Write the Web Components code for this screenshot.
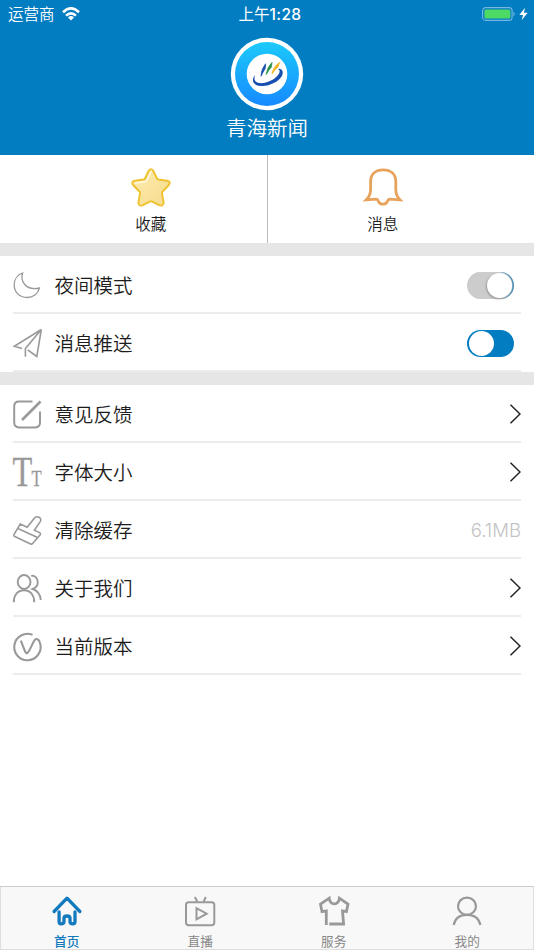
<!DOCTYPE html>
<html lang="zh-CN">
<head>
<meta charset="utf-8">
<title>青海新闻</title>
<style>
  html, body {
    margin: 0;
    height: 100%;
  }
  body {
    font-family: "Inter", "Noto Sans CJK SC", sans-serif;
    font-weight: 350;
    color: #1c1c1c;
    background: #fff;
    overflow: hidden;
  }
</style>
</head>
<body>
<news-app></news-app>

<script>
(function() {
  const icons = {
    star: `<defs><linearGradient id="g" x1="0" y1="0" x2="1" y2="1"><stop offset="0" stop-color="#fdebb0"/><stop offset="1" stop-color="#f7db8c"/></linearGradient></defs>
      <path d="M17.7 2.8Q20 -.5 22.3 2.8L26 10.5Q26.4 11.3 27.4 11.5L36 12.7Q40.5 13.7 37.8 17L31.6 23.5Q30.8 24.4 31 25.6L32.6 34Q32.8 38.6 28.6 37.4L21.2 33.6Q20 33 18.8 33.6L11.4 37.4Q7.2 38.6 7.4 34L9 25.6Q9.2 24.4 8.4 23.5L2.2 17Q-.5 13.7 4 12.7L12.6 11.5Q13.6 11.3 14 10.5Z" fill="url(#g)" stroke="#efc22f" stroke-width="1.9"/>
      <path d="M4.5 15L14.5 13.5Q15.6 13.2 16 12.3L20 4" fill="none" stroke="#fffbe8" stroke-width="1.3" stroke-linecap="round"/>`,
    bell: `<path d="M3.2 31.8Q7.6 27.5 7.6 21.5V13.7C7.6 6 12.8 1.8 20.2 1.8S32.8 6 32.8 13.7V21.5Q32.8 27.5 37 31.8L26.8 31.2Q25.2 31.4 24.5 33.2Q23.3 36.2 19.9 36.2Q16.6 36.2 15.4 33.2Q14.7 31.4 13.2 31.2Z" fill="none" stroke="#e7a35c" stroke-width="2.8"/>`,
    moon: `<path d="M9.6 3C7.3 10 11.5 21 26.4 18C25 24 20 27.5 14 27.5C6.5 27.5 1.2 22 1.2 15C1.2 9.5 4.5 4.7 9.6 3Z" stroke-width="1.3"/>`,
    plane: `<path d="M12.4 28.7V20.6L28.3 1.5L1.3 18.3L9 20.5M28.3 1.5L23.8 28.5L14.7 21.8" stroke-width="1.6"/>`,
    edit: `<path d="M19.5 2.4H6Q1.2 2.4 1.2 7.2V23.6Q1.2 28.4 6 28.4H22.2Q27 28.4 27 23.6V12.5" stroke-width="2"/><path d="M9 21L27.5 2.5" stroke-width="2.6"/>`,
    font: `<g fill="#999" stroke="#999" stroke-width=".3" font-family="Liberation Serif" font-weight="400"><text transform="translate(-.4 29.3) scale(.77 1)" font-size="42">T</text><text transform="translate(18.6 29.3) scale(.74 1)" font-size="22.5">T</text></g>`,
    brush: `<path d="M7.2 9L14.2 12.3L21.3 3.2C23.5.2 29.8 2.5 27.2 6.6L21.4 15.2L26.6 17.6Q28 18.4 27.2 19.8L19.6 28.5Q18.8 29.5 17.6 29L1.3 21.2Q.3 20.6 1.1 19.4ZM4.3 13.2L24 22.2" stroke-width="1.6"/>`,
    people: `<ellipse cx="11.1" cy="9" rx="6.4" ry="7"/><path d="M.8 29.2C.8 22 4.6 17.2 11 17.2S21.2 22 21.2 29.2M18.2 2.9C22 2.2 24.8 5.5 24.8 9.3C24.8 12.8 22.8 14.8 19.8 16C24.5 17.6 27.2 21.5 27.8 27"/>`,
    version: `<path d="M19.6 3.9A13.2 13.2 0 1 0 27 12C26.2 9 24.2 7.4 22.5 8.3C20.2 9.4 17.5 19.3 14.2 22.2C13 22.5 12.3 21 11.5 19L7.8 9.7" stroke-width="2.1"/>`,
    home: `<path d="M2.1 15.5L15 2.2L27.9 15.5M7.1 15.8V25.8Q7.1 27.8 9 27.8Q12 27.8 12 25.5V22Q12.2 20 15 20T18 22V25.5Q18 27.8 20.9 27.8Q23 27.8 23 25.8V15.8" fill="none" stroke-width="3.3" stroke-linecap="round" stroke-linejoin="round"/>`,
    tv: `<rect x="1" y="6.2" width="28.3" height="23" rx="2.7" stroke-width="2"/><path d="M9.8 1L12.3 5.5M20.8 1L18.7 5.5M11.5 12.2V23.4L21.7 17.7Z" stroke-width="2"/>`,
    shirt: `<path d="M7.3 29V14.9L3 15.7L1.5 8.2L10.2 2.2C11 9.8 19.6 9.8 20.4 2.2L29 8.2L27.4 15.7L23.5 14.9L24.6 28H10.3" stroke-width="2.8"/>`,
    person: `<ellipse cx="15" cy="10.2" rx="9" ry="8.6" stroke-width="2.2"/><path d="M1.7 29C3 22.3 8.2 18.8 15 18.8S27 22.3 28.4 29" stroke-width="2.2"/>`
  };

  // attach an open shadow root filled from a template
  function render(el, html) {
    const template = document.createElement("template");
    template.innerHTML = html;
    el.attachShadow({ mode: "open" });
    el.shadowRoot.appendChild(template.content.cloneNode(true));
  }

  class AppIcon extends HTMLElement {
    connectedCallback() {
      const size = this.getAttribute("size") || 30;
      render(this, `
        <style>
          :host { display: block; flex: none; color: #999; }
          svg { display: block; overflow: visible; }
        </style>
        <svg width="${size}" height="${size}" viewBox="0 0 ${size} ${size}" fill="none" stroke="currentColor" stroke-width="1.9">${icons[this.getAttribute("name")]}</svg>
      `);
    }
  }

  class StatusBar extends HTMLElement {
    constructor() {
      super();
      render(this, `
        <style>
          :host {
            display: grid;
            grid-template-columns: 1fr auto 1fr;
            align-items: center;
            height: 27px;
            padding: 0 6px 0 8px;
            color: #fff;
            font-size: 15.5px;
            line-height: 26px;
          }
          .side { display: flex; align-items: center; gap: 8px; }
          .side span { padding-top: 2px; }
          .right { justify-content: flex-end; gap: 3px; }
          .time { padding-top: 1px; margin-left: 4px; font-weight: 400; }
          .time b { font-weight: 500; letter-spacing: .4px; }
          svg { display: block; }
          .wifi { margin-left: -1px; }
        </style>
        <div class="side">
          <span>运营商</span>
          <svg class="wifi" width="18" height="14" viewBox="0 0 18 14" fill="none" stroke="#fff" stroke-width="2.6">
            <path d="M1 5.2Q9-2.4 17 5.2M4 8.6Q9 4 14 8.6"/>
            <path d="M6 10.4Q9 7.8 12 10.4L9 13.5Z" fill="#fff" stroke="none"/>
          </svg>
        </div>
        <span class="time">上午<b>1:28</b></span>
        <div class="side right">
          <svg width="34" height="14" viewBox="0 0 34 14">
            <rect x=".6" y=".6" width="29.5" height="12.8" rx="3.2" fill="none" stroke="#76b8e2" stroke-width="1.1"/>
            <rect x="2.4" y="2.4" width="26" height="9.2" rx="1.6" fill="#4cd964"/>
            <path d="M31.5 4.5Q34 7 31.5 9.5Z" fill="#76b8e2"/>
          </svg>
          <svg width="9" height="14" viewBox="0 0 9 14"><path d="M6 .7L.3 8H4L2.7 13.3L8.7 5.7H4.9Z" fill="#fff"/></svg>
        </div>
      `);
    }
  }

  class ProfileHeader extends HTMLElement {
    constructor() {
      super();
      render(this, `
        <style>
          :host {
            display: flex;
            flex-direction: column;
            align-items: center;
            height: 128px;
            padding-top: 10px;
            box-sizing: border-box;
            color: #fff;
          }
          svg { display: block; }
          .name { font-size: 20.5px; line-height: 30px; margin-top: 3px; }
        </style>
        <svg width="74" height="74" viewBox="0 0 74 74">
          <defs><linearGradient id="sky" x1="0" y1="0" x2="0" y2="1"><stop offset="0" stop-color="#1ccafa"/><stop offset="1" stop-color="#1689ff"/></linearGradient></defs>
          <circle cx="37" cy="37" r="36.2" fill="#fff"/>
          <circle cx="37" cy="37" r="32" fill="url(#sky)"/>
          <circle cx="37" cy="37" r="20.3" fill="#fff"/>
          <path d="M25.2 38C21 42.5 22.5 48.6 31 49C42 49.2 54 41.5 52.6 34.5C52.2 32.6 50.3 31.3 48 31.9C52.8 33.8 46.5 43.2 35 45.7C26.8 47.4 22.6 44 25.2 38Z" fill="#164fae"/>
          <path d="M31 39.2Q31.2 32 35.6 26.8L35.2 31.5Q33 35 31 39.2Z" fill="#174fae" stroke="#174fae" stroke-width=".8"/>
          <path d="M36.2 37.5Q37 30.5 42 25.4L41.4 30Q38.5 33.2 36.2 37.5Z" fill="#279447" stroke="#279447" stroke-width=".8"/>
          <path d="M42 37Q43.2 29.5 49.6 25.4L48 30Q44.5 32.8 42 37Z" fill="#efb621" stroke="#efb621" stroke-width=".8"/>
        </svg>
        <div class="name"><slot></slot></div>
      `);
    }
  }

  class QuickLink extends HTMLElement {
    constructor() {
      super();
      render(this, `
        <style>
          :host {
            display: flex;
            flex-direction: column;
            align-items: center;
            gap: 7px;
            padding-top: 13px;
            height: 88px;
            box-sizing: border-box;
            font-size: 15.5px;
            line-height: 20px;
          }
        </style>
        <app-icon name="${this.getAttribute("icon")}" size="40"></app-icon>
        <span><slot></slot></span>
      `);
    }
  }

  class ToggleSwitch extends HTMLElement {
    constructor() {
      super();
      render(this, `
        <style>
          :host {
            display: flex;
            align-items: center;
            width: 47px;
            height: 27px;
            padding: 0 1px 0 2px;
            margin-top: 2px;
            box-sizing: border-box;
            border-radius: 14px;
            background: #037dc1;
          }
          :host([off]) {
            justify-content: flex-end;
            padding: 0;
            background: #ccc;
            box-shadow: inset -1.5px 0 0 #4b91bd;
          }
          .knob {
            width: 25px;
            height: 25px;
            border-radius: 50%;
            background: #fff;
          }
          :host([off]) .knob {
            margin-right: 2px;
            box-shadow: -1px 1px 2px #999;
          }
        </style>
        <div class="knob"></div>
      `);
    }
  }

  class SettingsRow extends HTMLElement {
    constructor() {
      super();
      render(this, `
        <style>
          :host {
            display: flex;
            align-items: center;
            height: 58px;
            margin: 0 13px;
            padding-top: 1px;
            box-sizing: border-box;
            border-bottom: 2px solid #ececec;
            font-size: 19.5px;
            line-height: 30px;
          }
          .label { flex: 1; margin: 2px 0 0 11.5px; }
          .arrow { display: block; }
        </style>
        <app-icon name="${this.getAttribute("icon")}"></app-icon>
        <span class="label"><slot></slot></span>
        <slot name="end">
          <svg class="arrow" width="12" height="20" viewBox="0 0 12 20" fill="none" stroke="#222" stroke-width="1.5"><path d="M1.5 .8L11 10L1.5 19.2"/></svg>
        </slot>
      `);
    }
  }

  class SettingsGroup extends HTMLElement {
    constructor() {
      super();
      render(this, `
        <style>
          :host { display: block; border-top: 13px solid #e6e6e6; }
        </style>
        <slot></slot>
      `);
    }
  }

  class TabItem extends HTMLElement {
    constructor() {
      super();
      render(this, `
        <style>
          :host {
            display: flex;
            flex: 1;
            flex-direction: column;
            align-items: center;
            padding-top: 10px;
            font-size: 12.7px;
            line-height: 16px;
            color: #888;
          }
          span { margin-top: 8px; font-weight: 400; }
          :host([active]), :host([active]) app-icon { color: #127abd; }
          :host([active]) span { font-weight: 500; }
        </style>
        <app-icon name="${this.getAttribute("icon")}"></app-icon>
        <span><slot></slot></span>
      `);
    }
  }

  class NewsApp extends HTMLElement {
    constructor() {
      super();
      render(this, `
        <style>
          :host { display: flex; flex-direction: column; width: 534px; height: 950px; }
          header { background: #037dc1; }
          .quick { display: flex; }
          .quick quick-link { width: 267px; }
          .quick .fav { padding-left: 35px; border-right: 1px solid #bbb; width: 268px; }
          .quick .msg { padding-right: 36px; }
          main { flex: 1; }
          .size { color: #c3c3c3; font-size: 18.6px; margin-top: 1px; }
          toggle-switch { margin-right: 7.5px; }
          nav {
            display: flex;
            height: 64px;
            background: #f8f8f8;
            box-shadow: inset 0 1px #ccc, inset 0 0 0 1px #dedede;
          }
        </style>
        <header>
          <status-bar></status-bar>
          <profile-header>青海新闻</profile-header>
        </header>
        <div class="quick">
          <quick-link class="fav" icon="star">收藏</quick-link>
          <quick-link class="msg" icon="bell">消息</quick-link>
        </div>
        <main>
          <settings-group>
            <settings-row icon="moon">夜间模式<toggle-switch slot="end" off></toggle-switch></settings-row>
            <settings-row icon="plane">消息推送<toggle-switch slot="end"></toggle-switch></settings-row>
          </settings-group>
          <settings-group>
            <settings-row icon="edit">意见反馈</settings-row>
            <settings-row icon="font">字体大小</settings-row>
            <settings-row icon="brush">清除缓存<span class="size" slot="end">6.1MB</span></settings-row>
            <settings-row icon="people">关于我们</settings-row>
            <settings-row icon="version">当前版本</settings-row>
          </settings-group>
        </main>
        <nav>
          <tab-item icon="home" active>首页</tab-item>
          <tab-item icon="tv">直播</tab-item>
          <tab-item icon="shirt">服务</tab-item>
          <tab-item icon="person">我的</tab-item>
        </nav>
      `);
    }
  }

  window.customElements.define("app-icon", AppIcon);
  window.customElements.define("status-bar", StatusBar);
  window.customElements.define("profile-header", ProfileHeader);
  window.customElements.define("quick-link", QuickLink);
  window.customElements.define("toggle-switch", ToggleSwitch);
  window.customElements.define("settings-row", SettingsRow);
  window.customElements.define("settings-group", SettingsGroup);
  window.customElements.define("tab-item", TabItem);
  window.customElements.define("news-app", NewsApp);
})();
</script>
</body>
</html>
